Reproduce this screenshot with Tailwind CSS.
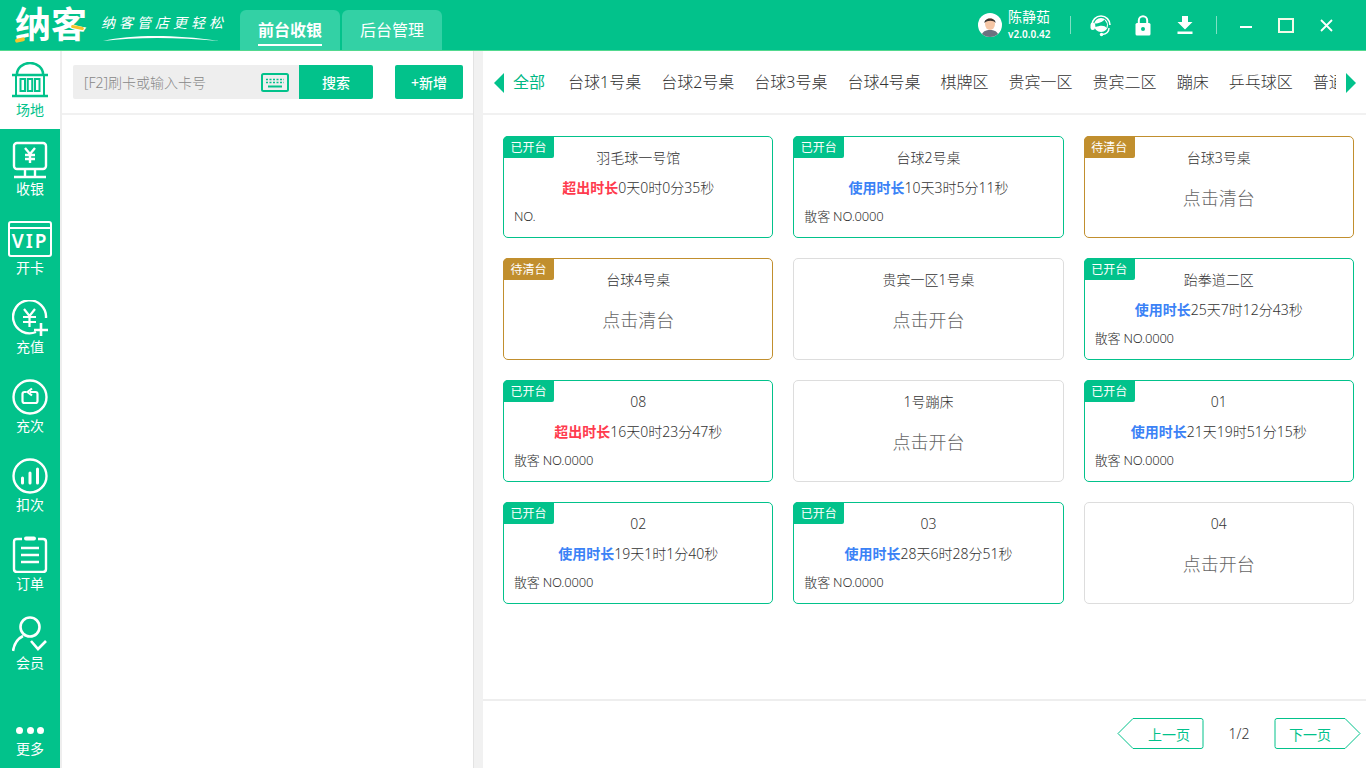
<!DOCTYPE html>
<html lang="zh-CN">
<head>
    <meta charset="UTF-8">
    <title>纳客</title>
    <script src="https://cdn.jsdelivr.net/npm/@tailwindcss/browser@4"></script>
</head>
<body class="w-[1366px] h-[768px] overflow-hidden bg-white font-['Noto_Sans','Noto_Sans_CJK_SC',sans-serif] text-[#333]">
    <!-- top bar -->
    <header class="h-[51px] bg-[#02c28b] border-b border-[#52d98f] flex items-end text-white">
        <div class="relative w-[72px] ml-[15px] mb-[5px] text-[36px] leading-[40px] font-bold whitespace-nowrap">纳客
            <span class="absolute left-[0px] bottom-[3px] w-[10px] h-[4px] bg-[#f5c52c] -rotate-12 rounded-sm"></span>
            <span class="absolute right-[3px] top-[21px] w-[13px] h-[3px] bg-[#f5c52c] rotate-12 rounded-sm"></span>
        </div>
        <div class="relative w-[126px] ml-[14px] h-[50px] shrink-0">
            <div class="pt-[13px] text-[14px] leading-[20px] italic tracking-[4px] whitespace-nowrap">纳客管店更轻松</div>
            <svg class="absolute left-0 top-[33px]" width="126" height="10" viewBox="0 0 126 10"><path d="M2 8 C30 2 70 1 118 8 C75 4 35 4 2 8Z" fill="#fff"/></svg>
        </div>
        <div class="ml-[13px] flex gap-[2px]">
            <div class="w-[100px] h-[40px] bg-[#33d1a5] rounded-t-[6px] flex justify-center pt-[7px]">
                <span class="h-[29px] text-[16px] leading-[26px] font-bold border-b-2 border-white">前台收银</span>
            </div>
            <div class="w-[100px] h-[40px] bg-[#33d1a5] rounded-t-[6px] flex justify-center pt-[7px]">
                <span class="text-[16px] leading-[26px]">后台管理</span>
            </div>
        </div>
        <div class="ml-auto h-[50px] flex items-center">
            <svg class="w-[24px] h-[24px]" viewBox="0 0 24 24">
                <defs><clipPath id="av"><circle cx="12" cy="12" r="12"/></clipPath></defs>
                <g clip-path="url(#av)">
                    <rect width="24" height="24" fill="#fff"/>
                    <path d="M3 24 C4 18 8 17 12 17 C16 17 20 18 21 24Z" fill="#6b7280"/>
                    <ellipse cx="12" cy="11" rx="5" ry="6" fill="#f5c6a5"/>
                    <path d="M6.5 10 C6 4 18 4 17.5 10 C16 7 9 7 6.5 10Z" fill="#3a3431"/>
                </g>
            </svg>
            <div class="ml-[6px] w-[44px]">
                <div class="text-[14px] leading-[18px] whitespace-nowrap">陈静茹</div>
                <div class="text-[10px] leading-[16px] font-semibold whitespace-nowrap">v2.0.0.42</div>
            </div>
            <div class="ml-[18px] w-px h-[18px] bg-[#7fe0c4]"></div>
            <!-- headset -->
            <svg class="ml-[19px]" width="22" height="24" viewBox="0 0 22 24" fill="none">
                <path d="M2 12 A9 9 0 0 1 20 12" stroke="#fff" stroke-width="1.6"/>
                <circle cx="11" cy="12" r="7" fill="#fff"/>
                <path d="M5 10.5 C9 10.5 13 8.5 14.5 6.5 C15.5 8.5 17 10 17 11.5 L16.5 15 C15 11.5 9 12.5 5.5 14Z" fill="#02c28b"/>
                <rect x="0.5" y="9.5" width="4.5" height="7.5" rx="2.2" fill="#fff"/>
                <path d="M19 15 C19 19 16 21 12 21.5" stroke="#fff" stroke-width="1.4"/>
                <circle cx="11.5" cy="21.5" r="1.7" fill="#fff"/>
            </svg>
            <!-- lock -->
            <svg class="ml-[23px]" width="16" height="21" viewBox="0 0 16 21" fill="none">
                <path d="M3.8 9 V5.5 a4.2 4.2 0 0 1 8.4 0 V9" stroke="#fff" stroke-width="2"/>
                <rect x="0.5" y="8" width="15" height="12.5" rx="1.5" fill="#fff"/>
                <circle cx="8" cy="14" r="2" fill="#02c28b"/>
            </svg>
            <!-- download -->
            <svg class="ml-[26px]" width="16" height="19" viewBox="0 0 16 19" fill="#fff">
                <path d="M5 0 H11 V6 H15.5 L8 13.5 L0.5 6 H5Z"/>
                <rect x="0.5" y="15.5" width="15" height="2.5"/>
            </svg>
            <div class="ml-[23px] w-px h-[18px] bg-[#7fe0c4]"></div>
            <div class="ml-[23px] w-[12px] h-[2px] bg-white mt-[4px]"></div>
            <div class="ml-[26px] w-[16px] h-[15px] border-2 border-[#f2fbe8]"></div>
            <svg class="ml-[26px] mr-[33px]" width="13" height="13" viewBox="0 0 13 13" stroke="#fff" stroke-width="1.8"><path d="M1 1 L12 12 M12 1 L1 12"/></svg>
        </div>
    </header>

    <div class="h-[717px] flex">
        <!-- side nav -->
        <nav class="w-[60px] shrink-0 bg-[#02c28b] flex flex-col text-white text-[14px] leading-[18px]">
            <div class="h-[78px] bg-white text-[#02c28b] flex flex-col items-center pt-[11px]">
                <svg width="38" height="36" viewBox="0 0 38 36" fill="none" stroke="#02c28b" stroke-width="2">
                    <path d="M6 12 A13 11 0 0 1 32 12" stroke-width="2.5"/>
                    <path d="M1 13 H37" stroke-width="2.5"/>
                    <path d="M5 14 V33 M33 14 V33"/>
                    <rect x="9.5" y="17" width="4.5" height="12"/>
                    <rect x="16.75" y="17" width="4.5" height="12"/>
                    <rect x="24" y="17" width="4.5" height="12"/>
                    <path d="M1 34 H37" stroke-width="2.5"/>
                </svg>
                <span class="mt-[3px]">场地</span>
            </div>
            <div class="h-[79px] flex flex-col items-center pt-[12px]">
                <svg width="36" height="38" viewBox="0 0 36 38" fill="none" stroke="#fff" stroke-width="2.4">
                    <rect x="2" y="2" width="32" height="26" rx="3"/>
                    <path d="M13 28 V35 M23 28 V35 M2 36 H34"/>
                    <path d="M13 7 L18 13 L23 7 M18 13 V22 M13 14 H23 M13 18 H23"/>
                </svg>
                <span class="mt-[1px]">收银</span>
            </div>
            <div class="h-[79px] flex flex-col items-center pt-[13px]">
                <div class="relative w-[44px] h-[36px] rounded-[3px] border-[2.4px] border-white">
                    <div class="h-[6px] border-b-2 border-white"></div>
                    <div class="text-center text-[19px] leading-[25px] font-semibold tracking-[2px]">VIP</div>
                </div>
                <span class="mt-[2px]">开卡</span>
            </div>
            <div class="h-[79px] flex flex-col items-center pt-[13px]">
                <svg width="36" height="36" viewBox="0 0 36 36" fill="none" stroke="#fff" stroke-width="2.4">
                    <path d="M24 32 A16.5 16.5 0 1 1 34 18"/>
                    <path d="M12 9 L17.5 16 L23 9 M17.5 16 V27 M11 17 H24 M11 22 H24" stroke-width="2.2"/>
                    <path d="M29 23 V36 M22 30 H36" stroke-width="2.6"/>
                </svg>
                <span class="mt-[2px]">充值</span>
            </div>
            <div class="h-[79px] flex flex-col items-center pt-[13px]">
                <svg width="36" height="36" viewBox="0 0 36 36" fill="none" stroke="#fff" stroke-width="2.4">
                    <circle cx="18" cy="18" r="16.5"/>
                    <path d="M14.5 13 H12.5 Q10.5 13 10.5 15 V22 Q10.5 24 12.5 24 H23.5 Q25.5 24 25.5 22 V15 Q25.5 13 23.5 13 H18" stroke-width="2.2"/>
                    <path d="M20 9.5 L15.5 13 L20 16.5" stroke-width="2.2"/>
                </svg>
                <span class="mt-[2px]">充次</span>
            </div>
            <div class="h-[79px] flex flex-col items-center pt-[13px]">
                <svg width="36" height="36" viewBox="0 0 36 36" fill="none" stroke="#fff">
                    <circle cx="18" cy="18" r="16.5" stroke-width="2.4"/>
                    <path d="M10.5 20 V25 M18 15 V25 M25.5 11 V25" stroke-width="3" stroke-linecap="round"/>
                </svg>
                <span class="mt-[2px]">扣次</span>
            </div>
            <div class="h-[79px] flex flex-col items-center pt-[12px]">
                <svg width="36" height="37" viewBox="0 0 36 37" fill="none" stroke="#fff" stroke-width="2.4">
                    <path d="M10 3 H5 Q2 3 2 6 V33 Q2 36 5 36 H31 Q34 36 34 33 V6 Q34 3 31 3 H26"/>
                    <rect x="12" y="0.5" width="12" height="4" rx="2" fill="#fff" stroke="none"/>
                    <path d="M9 12 H27 M9 19 H27 M9 26 H27"/>
                </svg>
                <span class="mt-[2px]">订单</span>
            </div>
            <div class="h-[79px] flex flex-col items-center pt-[13px]">
                <svg width="36" height="36" viewBox="0 0 36 36" fill="none" stroke="#fff" stroke-width="2.6">
                    <circle cx="18" cy="11" r="9.5"/>
                    <path d="M1 35 C2 28 5 23 11 20"/>
                    <path d="M19 25 L26 33 L34 25"/>
                </svg>
                <span class="mt-[2px]">会员</span>
            </div>
            <div class="mt-auto h-[46px] flex flex-col items-center">
                <div class="flex gap-[3.5px] mt-[5px] mb-[6px]">
                    <span class="w-[7px] h-[7px] rounded-full bg-white"></span>
                    <span class="w-[7px] h-[7px] rounded-full bg-white"></span>
                    <span class="w-[7px] h-[7px] rounded-full bg-white"></span>
                </div>
                <span>更多</span>
            </div>
        </nav>
        <div class="w-[2px] bg-[#eeeeee]"></div>

        <!-- left panel -->
        <section class="w-[411px] shrink-0">
            <div class="h-[64px] border-b-2 border-[#f1f1f1] pl-[11px] pt-[14px] flex items-start">
                <div class="w-[226px] h-[34px] bg-[#eeeeee] rounded-l-[2px] flex items-center pl-[11px] text-[14px] text-[#888] font-light">
                    <span>[F2]刷卡或输入卡号</span>
                    <svg class="ml-auto mr-[10px]" width="28" height="19" viewBox="0 0 28 19" fill="none" stroke="#02c28b">
                        <rect x="1" y="1" width="26" height="17" rx="1.5" stroke-width="2"/>
                        <path d="M5 6.5 H23 M5 9.5 H23" stroke-width="1.6" stroke-dasharray="2 1.5"/>
                        <path d="M7 13.5 H21" stroke-width="2"/>
                    </svg>
                </div>
                <button class="w-[74px] h-[34px] bg-[#02c28b] rounded-r-[2px] text-white text-[14px] font-medium">搜索</button>
                <button class="ml-[22px] w-[68px] h-[34px] bg-[#02c28b] rounded-[2px] text-white text-[14px] font-medium">+新增</button>
            </div>
        </section>
        <div class="w-[10px] bg-[#f1f1f1] border-l border-[#e3e3e3]"></div>

        <!-- right panel -->
        <main class="flex-1 flex flex-col min-w-0">
            <div class="h-[64px] border-b-2 border-[#f1f1f1] flex items-start pt-[18px] pl-[11px] text-[16px] leading-[26px]">
                <span class="mt-[4px] w-0 h-0 border-y-[10px] border-y-transparent border-r-[10px] border-r-[#02c28b]"></span>
                <div class="ml-[9px] w-[823px] overflow-hidden flex gap-[20px] font-light whitespace-nowrap text-[#333]">
                    <span class="text-[#00b884] font-normal mr-[3px]">全部</span>
                    <span>台球1号桌</span>
                    <span>台球2号桌</span>
                    <span>台球3号桌</span>
                    <span>台球4号桌</span>
                    <span>棋牌区</span>
                    <span>贵宾一区</span>
                    <span>贵宾二区</span>
                    <span>蹦床</span>
                    <span>乒乓球区</span>
                    <span>普通区</span>
                </div>
                <span class="ml-[10px] mt-[4px] w-0 h-0 border-y-[10px] border-y-transparent border-l-[10px] border-l-[#02c28b]"></span>
            </div>

            <div class="h-[584px] pt-[21px] pl-[20px] pr-[12px]">
                <div class="grid grid-cols-3 gap-x-[20px] gap-y-[20px] auto-rows-[102px] font-light">
                    <div class="relative rounded-[5px] border border-[#02c28b] text-center">
                        <span class="absolute -left-px -top-px w-[51px] h-[22px] rounded-tl-[5px] rounded-br-[2px] bg-[#02c28b] text-white text-[12px] leading-[24px] font-normal">已开台</span>
                        <div class="mt-[11px] text-[14px] leading-[20px]">羽毛球一号馆</div>
                        <div class="mt-[10px] text-[14px] leading-[20px]"><b class="text-[#ff3b4e] font-bold">超出时长</b>0天0时0分35秒</div>
                        <div class="mt-[9px] pl-[10px] text-left text-[13px] leading-[18px] tracking-[-0.2px]">NO.</div>
                    </div>
                    <div class="relative rounded-[5px] border border-[#02c28b] text-center">
                        <span class="absolute -left-px -top-px w-[51px] h-[22px] rounded-tl-[5px] rounded-br-[2px] bg-[#02c28b] text-white text-[12px] leading-[24px] font-normal">已开台</span>
                        <div class="mt-[11px] text-[14px] leading-[20px]">台球2号桌</div>
                        <div class="mt-[10px] text-[14px] leading-[20px]"><b class="text-[#3b82f6] font-bold">使用时长</b>10天3时5分11秒</div>
                        <div class="mt-[9px] pl-[10px] text-left text-[13px] leading-[18px] tracking-[-0.2px]">散客 NO.0000</div>
                    </div>
                    <div class="relative rounded-[5px] border border-[#c18f2e] text-center">
                        <span class="absolute -left-px -top-px w-[51px] h-[22px] rounded-tl-[5px] rounded-br-[2px] bg-[#c18f2e] text-white text-[12px] leading-[24px] font-normal">待清台</span>
                        <div class="mt-[11px] text-[14px] leading-[20px]">台球3号桌</div>
                        <div class="mt-[17px] text-[18px] leading-[26px] text-[#666]">点击清台</div>
                    </div>

                    <div class="relative rounded-[5px] border border-[#c18f2e] text-center">
                        <span class="absolute -left-px -top-px w-[51px] h-[22px] rounded-tl-[5px] rounded-br-[2px] bg-[#c18f2e] text-white text-[12px] leading-[24px] font-normal">待清台</span>
                        <div class="mt-[11px] text-[14px] leading-[20px]">台球4号桌</div>
                        <div class="mt-[17px] text-[18px] leading-[26px] text-[#666]">点击清台</div>
                    </div>
                    <div class="rounded-[5px] border border-[#dddddd] text-center">
                        <div class="mt-[11px] text-[14px] leading-[20px]">贵宾一区1号桌</div>
                        <div class="mt-[17px] text-[18px] leading-[26px] text-[#666]">点击开台</div>
                    </div>
                    <div class="relative rounded-[5px] border border-[#02c28b] text-center">
                        <span class="absolute -left-px -top-px w-[51px] h-[22px] rounded-tl-[5px] rounded-br-[2px] bg-[#02c28b] text-white text-[12px] leading-[24px] font-normal">已开台</span>
                        <div class="mt-[11px] text-[14px] leading-[20px]">跆拳道二区</div>
                        <div class="mt-[10px] text-[14px] leading-[20px]"><b class="text-[#3b82f6] font-bold">使用时长</b>25天7时12分43秒</div>
                        <div class="mt-[9px] pl-[10px] text-left text-[13px] leading-[18px] tracking-[-0.2px]">散客 NO.0000</div>
                    </div>

                    <div class="relative rounded-[5px] border border-[#02c28b] text-center">
                        <span class="absolute -left-px -top-px w-[51px] h-[22px] rounded-tl-[5px] rounded-br-[2px] bg-[#02c28b] text-white text-[12px] leading-[24px] font-normal">已开台</span>
                        <div class="mt-[11px] text-[14px] leading-[20px]">08</div>
                        <div class="mt-[10px] text-[14px] leading-[20px]"><b class="text-[#ff3b4e] font-bold">超出时长</b>16天0时23分47秒</div>
                        <div class="mt-[9px] pl-[10px] text-left text-[13px] leading-[18px] tracking-[-0.2px]">散客 NO.0000</div>
                    </div>
                    <div class="rounded-[5px] border border-[#dddddd] text-center">
                        <div class="mt-[11px] text-[14px] leading-[20px]">1号蹦床</div>
                        <div class="mt-[17px] text-[18px] leading-[26px] text-[#666]">点击开台</div>
                    </div>
                    <div class="relative rounded-[5px] border border-[#02c28b] text-center">
                        <span class="absolute -left-px -top-px w-[51px] h-[22px] rounded-tl-[5px] rounded-br-[2px] bg-[#02c28b] text-white text-[12px] leading-[24px] font-normal">已开台</span>
                        <div class="mt-[11px] text-[14px] leading-[20px]">01</div>
                        <div class="mt-[10px] text-[14px] leading-[20px]"><b class="text-[#3b82f6] font-bold">使用时长</b>21天19时51分15秒</div>
                        <div class="mt-[9px] pl-[10px] text-left text-[13px] leading-[18px] tracking-[-0.2px]">散客 NO.0000</div>
                    </div>

                    <div class="relative rounded-[5px] border border-[#02c28b] text-center">
                        <span class="absolute -left-px -top-px w-[51px] h-[22px] rounded-tl-[5px] rounded-br-[2px] bg-[#02c28b] text-white text-[12px] leading-[24px] font-normal">已开台</span>
                        <div class="mt-[11px] text-[14px] leading-[20px]">02</div>
                        <div class="mt-[10px] text-[14px] leading-[20px]"><b class="text-[#3b82f6] font-bold">使用时长</b>19天1时1分40秒</div>
                        <div class="mt-[9px] pl-[10px] text-left text-[13px] leading-[18px] tracking-[-0.2px]">散客 NO.0000</div>
                    </div>
                    <div class="relative rounded-[5px] border border-[#02c28b] text-center">
                        <span class="absolute -left-px -top-px w-[51px] h-[22px] rounded-tl-[5px] rounded-br-[2px] bg-[#02c28b] text-white text-[12px] leading-[24px] font-normal">已开台</span>
                        <div class="mt-[11px] text-[14px] leading-[20px]">03</div>
                        <div class="mt-[10px] text-[14px] leading-[20px]"><b class="text-[#3b82f6] font-bold">使用时长</b>28天6时28分51秒</div>
                        <div class="mt-[9px] pl-[10px] text-left text-[13px] leading-[18px] tracking-[-0.2px]">散客 NO.0000</div>
                    </div>
                    <div class="rounded-[5px] border border-[#dddddd] text-center">
                        <div class="mt-[11px] text-[14px] leading-[20px]">04</div>
                        <div class="mt-[17px] text-[18px] leading-[26px] text-[#666]">点击开台</div>
                    </div>
                </div>
            </div>

            <!-- pager -->
            <div class="flex-1 border-t-2 border-[#eeeeee] flex items-start justify-end pt-[16px] pr-[5px] text-[14px]">
                <div class="relative w-[87px] h-[33px] flex items-center justify-end pr-[14px] text-[#02c28b]">
                    <svg class="absolute inset-0" width="87" height="33" viewBox="0 0 87 33" fill="none" stroke="#02c28b"><path d="M1 16.5 L16 1.5 H84 Q86 1.5 86 3.5 V29.5 Q86 31.5 84 31.5 H16 Z"/></svg>
                    <span class="relative mt-[2px]">上一页</span>
                </div>
                <span class="w-[70px] h-[33px] text-center leading-[33px] text-[#333] font-light">1/2</span>
                <div class="relative w-[87px] h-[33px] flex items-center pl-[15px] text-[#02c28b]">
                    <svg class="absolute inset-0" width="87" height="33" viewBox="0 0 87 33" fill="none" stroke="#02c28b"><path d="M86 16.5 L71 1.5 H3 Q1 1.5 1 3.5 V29.5 Q1 31.5 3 31.5 H71 Z"/></svg>
                    <span class="relative mt-[2px]">下一页</span>
                </div>
            </div>
        </main>
    </div>
</body>
</html>
